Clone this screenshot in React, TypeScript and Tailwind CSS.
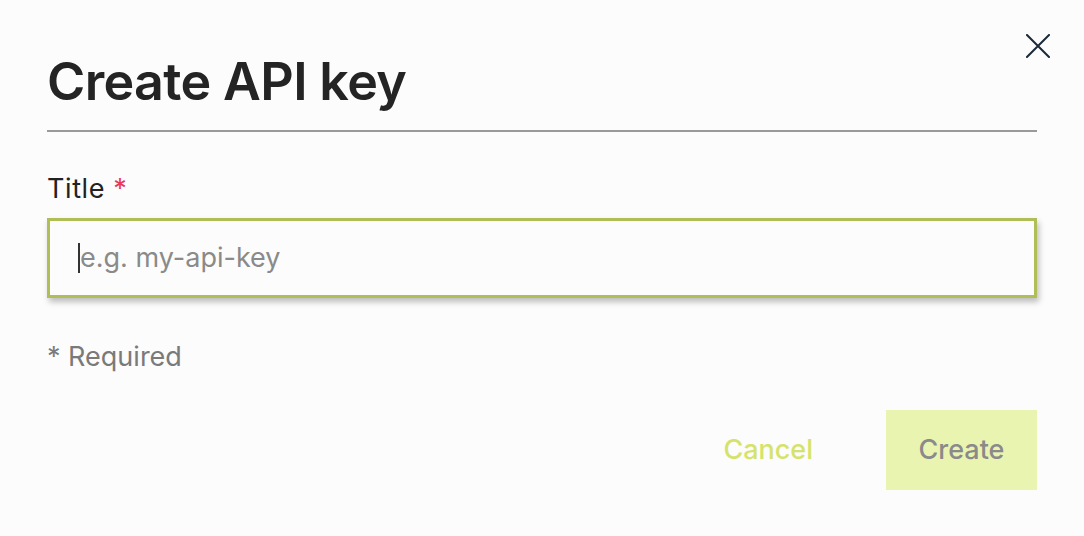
import React from "react";

export default function App() {
  return (
    <div className="w-[1084px] h-[536px] bg-[#fcfcfc] relative overflow-hidden" style={{ fontFamily: "Inter, 'Noto Sans', sans-serif" }}>
      <button className="absolute left-[1026px] top-[34px] w-[24px] h-[24px] text-[#1b2a3a]">
        <svg viewBox="0 0 24 24" width="24" height="24" fill="none" stroke="currentColor" strokeWidth="2" strokeLinecap="square">
          <path d="M1 1L23 23M23 1L1 23" />
        </svg>
      </button>
      <div className="px-[47px] pt-[50px]">
        <h1 className="text-[52px] leading-[64px] font-semibold text-[#242424] tracking-[-0.65px]">Create API key</h1>
        <div className="mt-[16px] h-[2px] bg-[#9a9a9a]" />
        <div className="mt-[42px] text-[27px] leading-[30px] text-[#222] tracking-[0.6px]">
          Title <span className="text-[#e8375a]">*</span>
        </div>
        <div className="mt-[14px] h-[80px] border-[3px] border-[#b1be58] bg-[#fcfcfc] shadow-[2px_4px_6px_rgba(0,0,0,0.25)] flex items-center pl-[28px]">
          <span className="w-[2px] h-[30px] bg-[#333]" />
          <span className="text-[27px] text-[#8a8a8a]">e.g. my-api-key</span>
        </div>
        <div className="mt-[44px] text-[27px] leading-[30px] text-[#7a7a7a]">* Required</div>
        <div className="mt-[38px] flex justify-end items-center">
          <span className="text-[27px] font-medium text-[#d5e36c] mr-[73px]">Cancel</span>
          <div className="w-[151px] h-[80px] bg-[#eaf4b1] flex items-center justify-center text-[27px] font-medium text-[#8a8a8a]">Create</div>
        </div>
      </div>
    </div>
  );
}
